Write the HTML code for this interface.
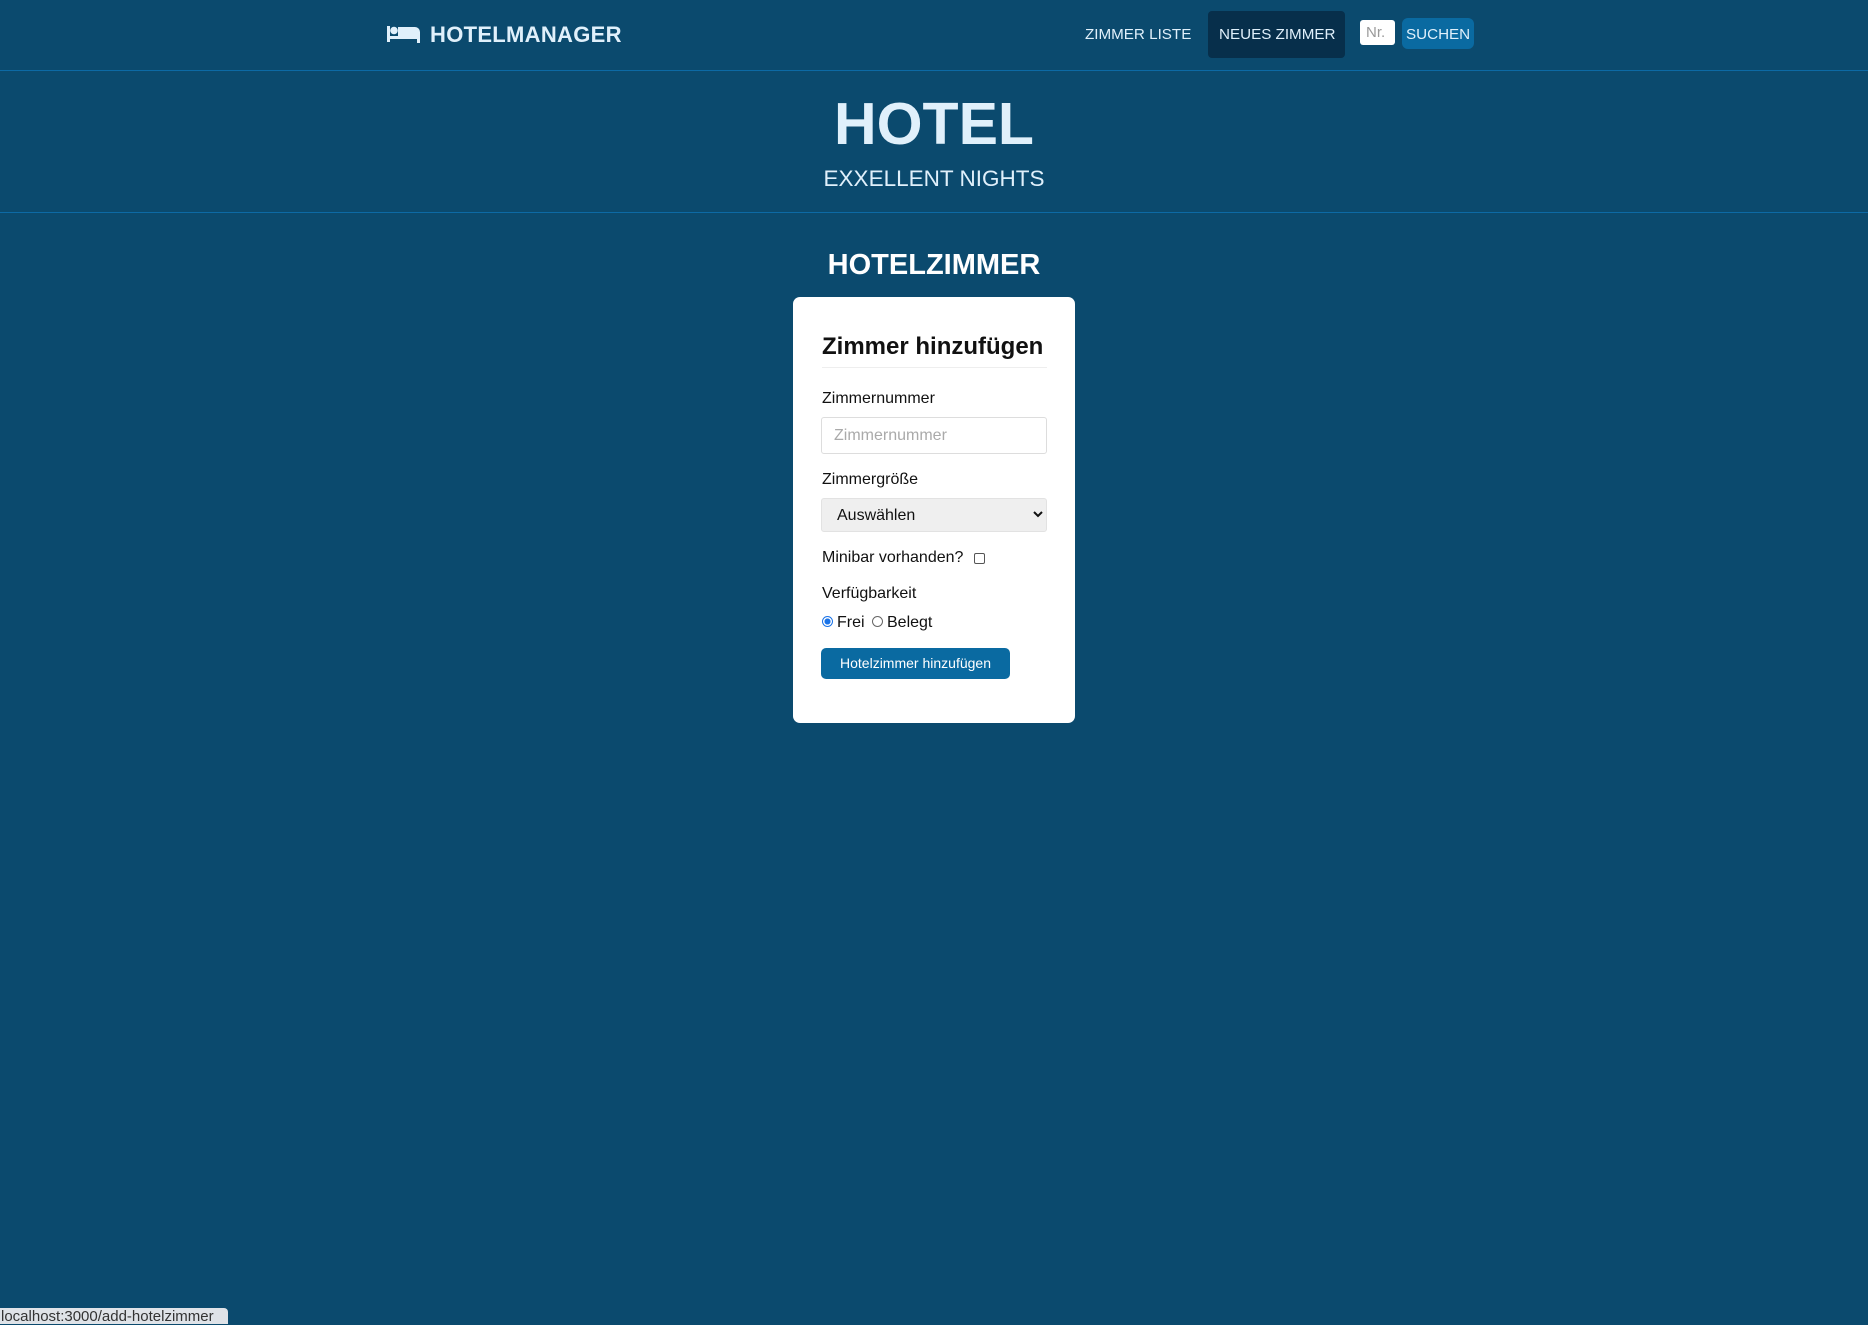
<!DOCTYPE html>
<html><head><meta charset="utf-8"><style>
*{box-sizing:border-box;margin:0;padding:0}
body{width:1868px;height:1324px;background:#0b4a6e;font-family:"Liberation Sans",sans-serif;position:relative;overflow:hidden;color:#fff}
.nav{position:absolute;left:0;top:0;width:1868px;height:71px;border-bottom:1px solid #0d6aa5}
.abs{position:absolute;white-space:nowrap}
.hero{position:absolute;left:0;top:71px;width:1868px;height:142px;border-bottom:1px solid #0d6aa5}
.card{position:absolute;left:793px;top:297px;width:282px;height:426px;background:#fff;border-radius:7px;color:#111}
.card .abs{color:#111}
</style></head><body>
<div class="nav">
<svg class="abs" style="left:387px;top:26px" width="33" height="17" viewBox="0 0 33 17" fill="#e0f0fb">
<rect x="0" y="0" width="3" height="16"/><circle cx="7" cy="4.5" r="3.8"/><path d="M11 1h17a5 5 0 0 1 5 5v4H11z"/><rect x="0" y="10" width="33" height="3"/><rect x="30" y="10" width="3" height="7"/></svg>
<div class="abs" style="left:430px;top:22px;font-size:22px;font-weight:bold;color:#e0f0fb;letter-spacing:0.3px">HOTELMANAGER</div>
<div class="abs" style="left:1085px;top:26px;font-size:15.2px;color:#e0f0fb">ZIMMER LISTE</div>
<div class="abs" style="left:1208px;top:11px;width:137px;height:47px;background:#072f4b;border-radius:4px"></div>
<div class="abs" style="left:1219px;top:26px;font-size:15.2px;color:#e0f0fb">NEUES ZIMMER</div>
<div class="abs" style="left:1360px;top:20px;width:35px;height:25px;background:#fff;border-radius:3px;color:#999;font-size:15px;padding:4px 0 0 6px">Nr.</div>
<div class="abs" style="left:1402px;top:18px;width:72px;height:31px;background:#0a6aa1;border-radius:6px;color:#e0f0fb;font-size:15.2px;padding:8px 0 0 4px">SUCHEN</div>
</div>
<div class="hero">
<div class="abs" style="left:0;width:1868px;text-align:center;top:19px;font-size:59px;font-weight:bold;color:#e0f0fb">HOTEL</div>
<div class="abs" style="left:0;width:1868px;text-align:center;top:95px;font-size:22.5px;color:#e0f0fb">EXXELLENT NIGHTS</div>
</div>
<div class="abs" style="left:0;width:1868px;text-align:center;top:249px;font-size:29px;font-weight:bold">HOTELZIMMER</div>
<div class="card">
<div class="abs" style="left:29px;top:36px;font-size:24px;font-weight:bold">Zimmer hinzufügen</div>
<div class="abs" style="left:29px;top:70px;width:225px;height:1px;background:#eee"></div>
<div class="abs" style="left:29px;top:93px;font-size:16px">Zimmernummer</div>
<div class="abs" style="left:28px;top:120px;width:226px;height:37px;border:1px solid #ddd;border-radius:3px;color:#aaa;font-size:16px;padding:9px 12px">Zimmernummer</div>
<div class="abs" style="left:29px;top:174px;font-size:16px">Zimmergröße</div>
<div class="abs" style="left:28px;top:201px;width:226px;height:34px;background:#efefef;border:1px solid #e2e2e2;border-radius:3px;font-size:16px;padding:8px 15px">Auswählen</div>
<svg class="abs" style="left:240px;top:213px" width="10" height="8" viewBox="0 0 10 8"><path d="M1 2l4 4 4-4" stroke="#111" stroke-width="2" fill="none"/></svg>
<div class="abs" style="left:29px;top:252px;font-size:16px">Minibar vorhanden?</div>
<div class="abs" style="left:181px;top:256px;width:11px;height:11px;border:1px solid #555;border-radius:2px"></div>
<div class="abs" style="left:29px;top:288px;font-size:16px">Verfügbarkeit</div>
<div class="abs" style="left:29px;top:319px;width:11px;height:11px;border:1px solid #1a73e8;border-radius:50%;background:radial-gradient(#1a73e8 45%,#fff 50%)"></div>
<div class="abs" style="left:44px;top:317px;font-size:16px">Frei</div>
<div class="abs" style="left:79px;top:319px;width:11px;height:11px;border:1px solid #666;border-radius:50%"></div>
<div class="abs" style="left:94px;top:317px;font-size:16px">Belegt</div>
<div class="abs" style="left:28px;top:351px;width:189px;height:31px;background:#0a6aa1;border-radius:5px;color:#fff;font-size:14px;text-align:center;padding-top:7px">Hotelzimmer hinzufügen</div>
</div>
<div class="abs" style="left:0;top:1308px;width:228px;height:16px;background:#dfe3e8;border-radius:0 4px 0 0;color:#333;font-size:15px;padding-left:1px;line-height:17px">localhost:3000/add-hotelzimmer</div>
</body></html>
